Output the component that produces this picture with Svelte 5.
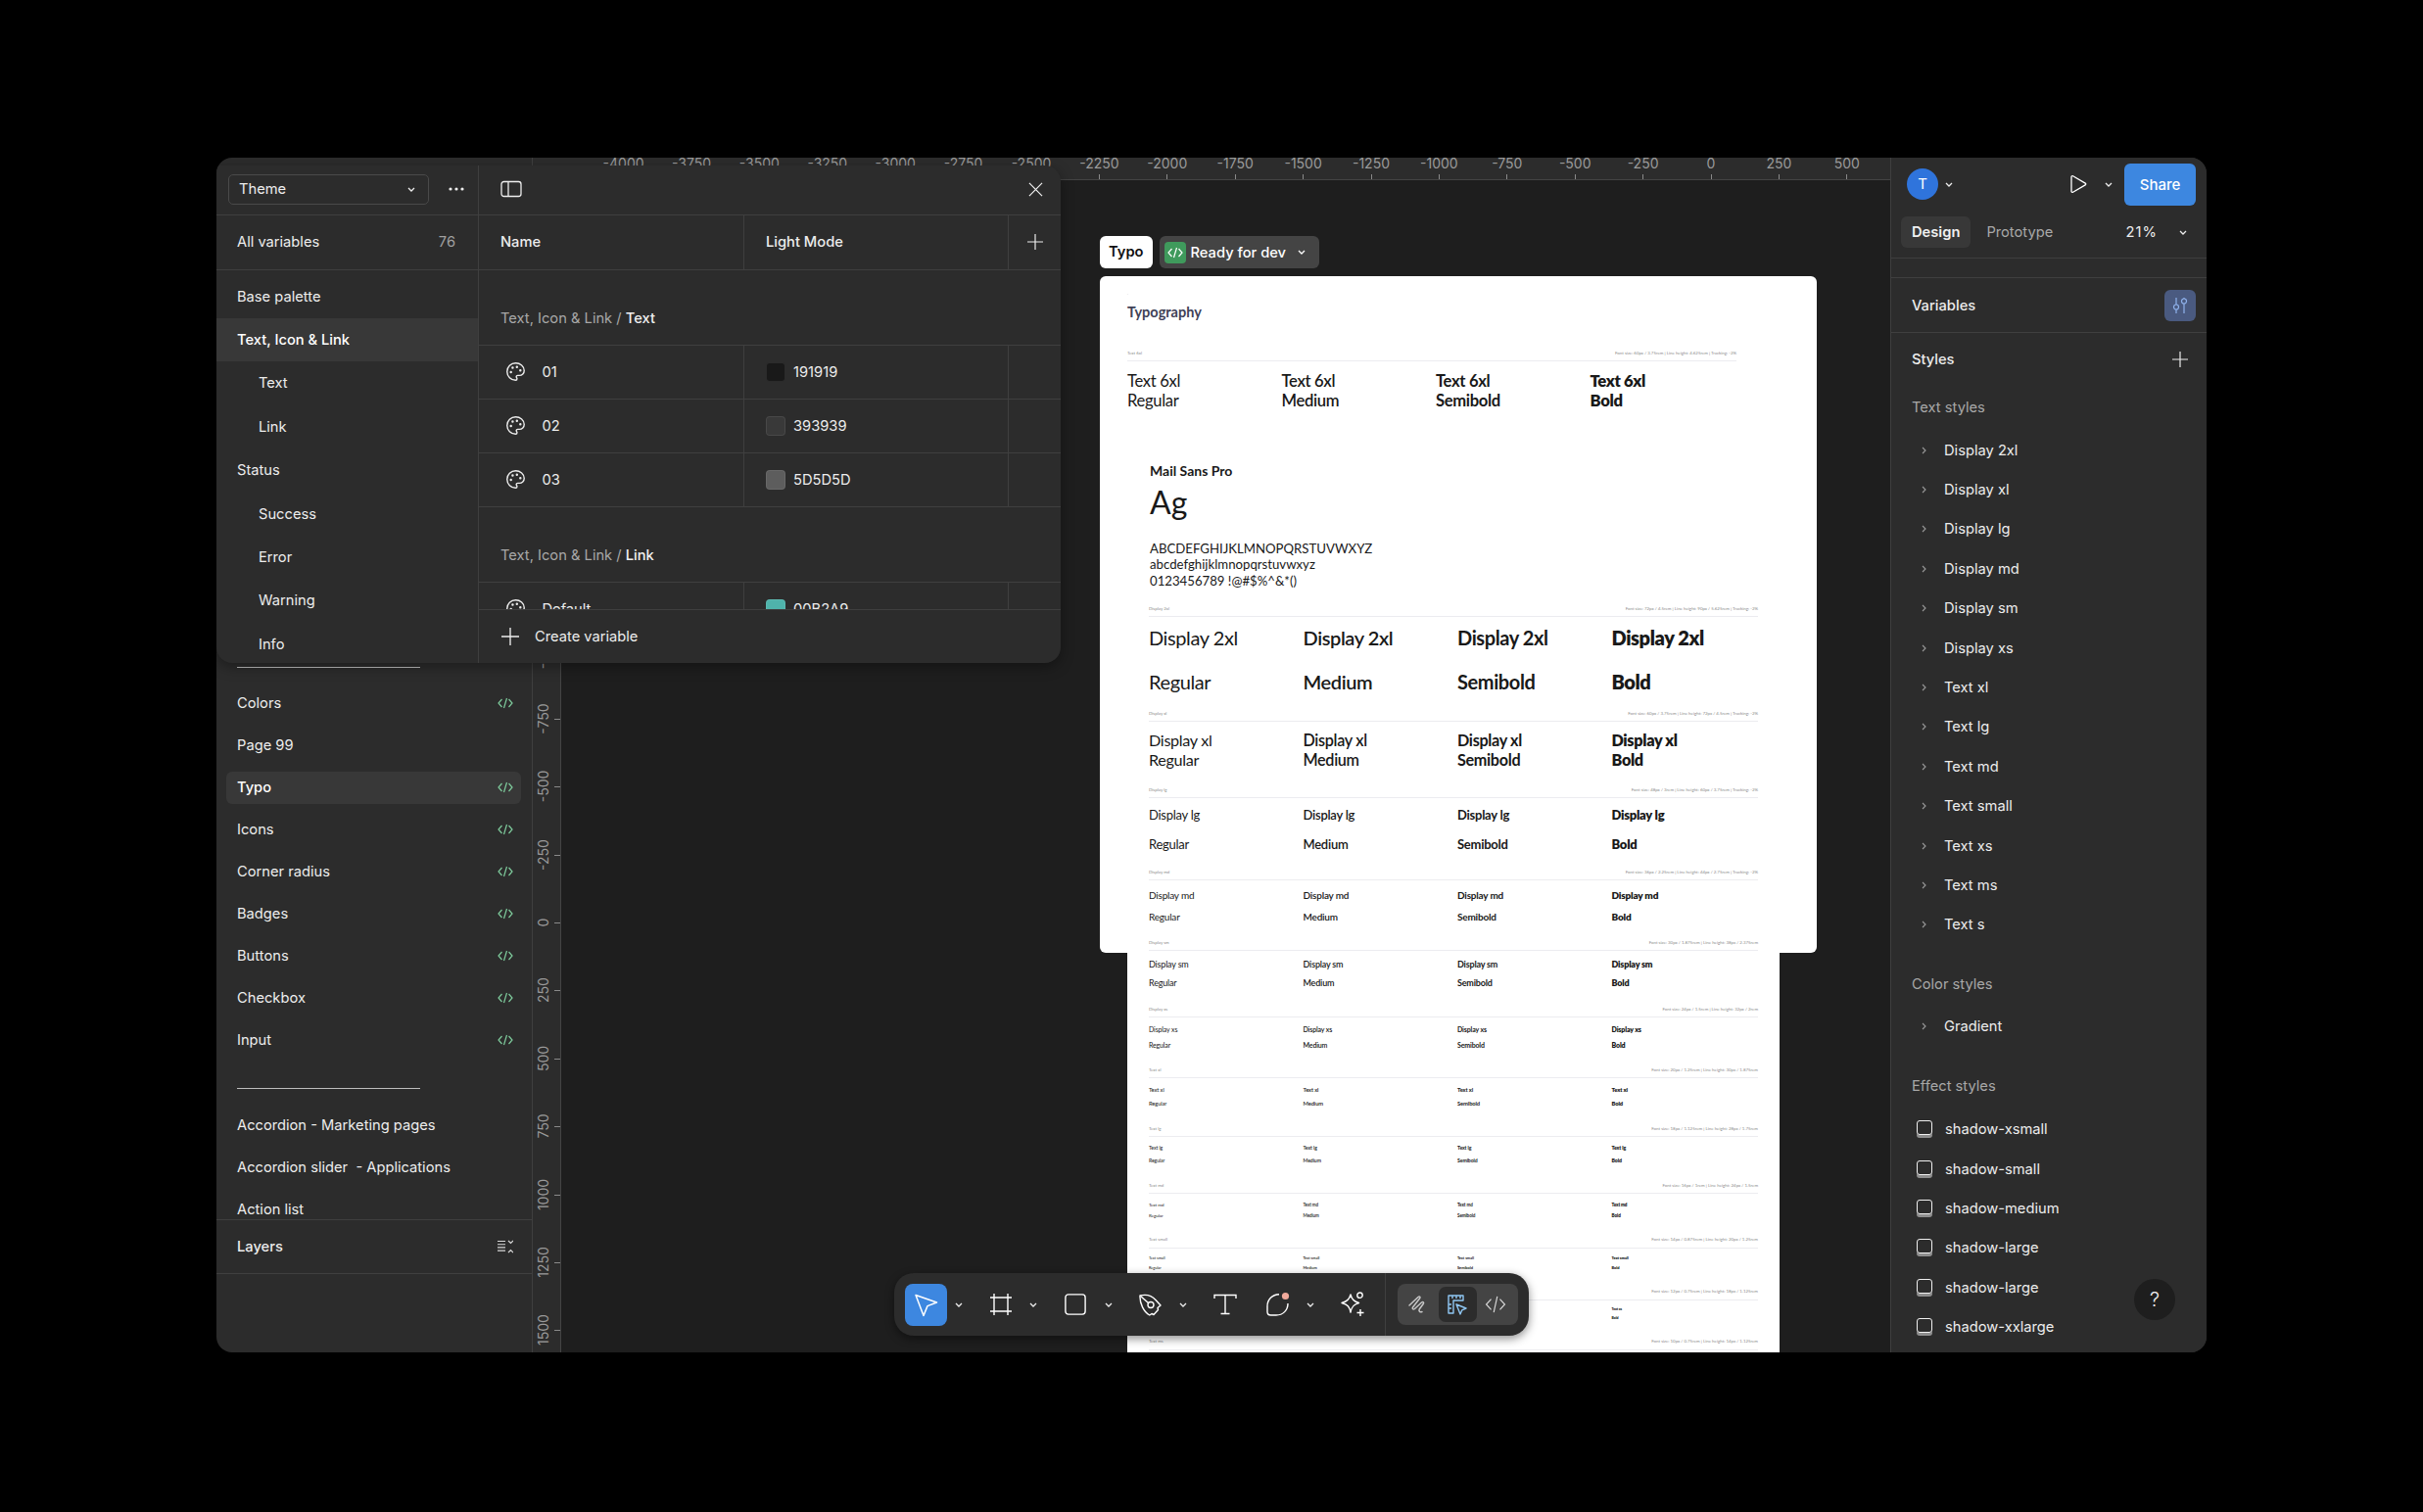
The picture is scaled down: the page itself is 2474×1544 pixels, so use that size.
<script>
  const hMarks = [];
  for (let v = -4000; v <= 500; v += 250) hMarks.push({ v, x: 1203 + (v / 250) * 69.4 });
  const vMarks = [];
  for (let v = -1000; v <= 1500; v += 250) vMarks.push({ v, y: 758 + (v / 250) * 69.4 });

  const pages = ['Colors', 'Page 99', 'Typo', 'Icons', 'Corner radius', 'Badges', 'Buttons', 'Checkbox', 'Input'];
  const pages2 = ['Accordion - Marketing pages', 'Accordion slider  - Applications', 'Action list'];
  const groups = [
    { t: 'Base palette' },
    { t: 'Text, Icon & Link', sel: true },
    { t: 'Text', sub: true },
    { t: 'Link', sub: true },
    { t: 'Status' },
    { t: 'Success', sub: true },
    { t: 'Error', sub: true },
    { t: 'Warning', sub: true },
    { t: 'Info', sub: true }
  ];
  const vars = [
    { n: '01', c: '#191919', v: '191919' },
    { n: '02', c: '#393939', v: '393939' },
    { n: '03', c: '#5D5D5D', v: '5D5D5D' }
  ];
  const textStyles = ['Display 2xl', 'Display xl', 'Display lg', 'Display md', 'Display sm', 'Display xs', 'Text xl', 'Text lg', 'Text md', 'Text small', 'Text xs', 'Text ms', 'Text s'];
  const shadows = ['shadow-xsmall', 'shadow-small', 'shadow-medium', 'shadow-large', 'shadow-large', 'shadow-xxlarge'];
  const weights = [
    { n: 'Regular', w: 400 },
    { n: 'Medium', w: 600 },
    { n: 'Semibold', w: 700 },
    { n: 'Bold', w: 800 }
  ];
  const S = [
    { l: 'Display 2xl', m: 'Font size: 72px / 4.5rem | Line height: 90px / 5.625rem | Tracking: -2%', y: 621.7, ln: 630, r1: 651.7, r2: 696.7, fs: 20 },
    { l: 'Display xl', m: 'Font size: 60px / 3.75rem | Line height: 72px / 4.5rem | Tracking: -2%', y: 729, ln: 737, r1: 757, r2: 777, fs: 16.2 },
    { l: 'Display lg', m: 'Font size: 48px / 3rem | Line height: 60px / 3.75rem | Tracking: -2%', y: 807, ln: 815, r1: 833, r2: 863, fs: 13 },
    { l: 'Display md', m: 'Font size: 36px / 2.25rem | Line height: 44px / 2.75rem | Tracking: -2%', y: 891, ln: 899, r1: 915, r2: 937, fs: 10 },
    { l: 'Display sm', m: 'Font size: 30px / 1.875rem | Line height: 38px / 2.375rem', y: 963, ln: 971, r1: 986, r2: 1005, fs: 9 },
    { l: 'Display xs', m: 'Font size: 24px / 1.5rem | Line height: 32px / 2rem', y: 1031, ln: 1039, r1: 1052, r2: 1068, fs: 7 },
    { l: 'Text xl', m: 'Font size: 20px / 1.25rem | Line height: 30px / 1.875rem', y: 1093, ln: 1101, r1: 1114, r2: 1128, fs: 5.8 },
    { l: 'Text lg', m: 'Font size: 18px / 1.125rem | Line height: 28px / 1.75rem', y: 1153, ln: 1161, r1: 1173, r2: 1186, fs: 5.2 },
    { l: 'Text md', m: 'Font size: 16px / 1rem | Line height: 24px / 1.5rem', y: 1211, ln: 1219, r1: 1231, r2: 1242, fs: 4.6 },
    { l: 'Text small', m: 'Font size: 14px / 0.875rem | Line height: 20px / 1.25rem', y: 1266, ln: 1275, r1: 1286, r2: 1296, fs: 4 },
    { l: 'Text xs', m: 'Font size: 12px / 0.75rem | Line height: 18px / 1.125rem', y: 1319, ln: 1328, r1: 1338, r2: 1347, fs: 3.5 },
    { l: 'Text ms', m: 'Font size: 10px / 0.75rem | Line height: 14px / 1.125rem', y: 1370, ln: 1379, r1: 1392, r2: 1400, fs: 3 }
  ];
  const sections = S.map((s, i) => ({
    ...s,
    h: (S[i + 1] ? S[i + 1].y : s.y + 60) - s.y,
    metaH: s.ln - s.y + 4,
    gap1: s.r1 - s.ln - 4.5,
    gap2: s.r2 - s.r1 - 8
  }));
</script>

{#snippet chev()}
  <svg class="chev" viewBox="0 0 8 5" width="8" height="5"><path d="M1 1l3 3 3-3" fill="none" stroke="currentColor" stroke-width="1.3" /></svg>
{/snippet}
{#snippet plus(size)}
  <svg viewBox="0 0 16 16" width={size} height={size}><path d="M8 0v16M0 8h16" stroke="currentColor" stroke-width="1.2" fill="none" /></svg>
{/snippet}
{#snippet code()}
  <svg viewBox="0 0 16 12" width="16" height="12" class="devmark"><path d="M4.5 2 1 6l3.5 4M11.5 2 15 6l-3.5 4M9.5 1 6.5 11" fill="none" stroke="currentColor" stroke-width="1.2" /></svg>
{/snippet}
{#snippet palette()}
  <svg viewBox="0 0 24 24" width="21" height="21" fill="none" stroke="currentColor" stroke-width="1.6" stroke-linecap="round" stroke-linejoin="round"><circle cx="13.5" cy="6.5" r=".6" fill="currentColor" /><circle cx="17.5" cy="10.5" r=".6" fill="currentColor" /><circle cx="8.5" cy="7.5" r=".6" fill="currentColor" /><circle cx="6.5" cy="12.5" r=".6" fill="currentColor" /><path d="M12 2C6.5 2 2 6.5 2 12s4.5 10 10 10c.926 0 1.648-.746 1.648-1.688 0-.437-.18-.835-.437-1.125-.29-.289-.438-.652-.438-1.125a1.64 1.64 0 0 1 1.668-1.668h1.996c3.051 0 5.555-2.503 5.555-5.554C21.965 6.012 17.461 2 12 2z" /></svg>
{/snippet}

<div class="window">
  <aside class="left">
    <div class="pages">
      <div class="sep-row"><i></i></div>
      {#each pages as p}
        <div class="page" class:on={p === 'Typo'}>
          <span>{p}</span>
          {#if p !== 'Page 99'}{@render code()}{/if}
        </div>
      {/each}
      <div class="sep-row two"><i></i></div>
      {#each pages2 as p}
        <div class="page"><span>{p}</span></div>
      {/each}
    </div>
    <div class="layers">
      <span>Layers</span>
      <svg viewBox="0 0 16 14" width="16" height="14" fill="none" stroke="#d8d8d8" stroke-width="1.1"><path d="M0 1.5h8M0 4.7h8M0 7.9h8M0 11.1h8M11 1l2.5 2.5L16 1M11 13l2.5-2.5L16 13" /></svg>
    </div>
  </aside>

  <main class="center">
    <div class="hruler">
      {#each hMarks as m}
        <div class="hmark" style="left:{m.x}px"><span>{m.v}</span><i></i></div>
      {/each}
    </div>
    <div class="stage">
      <div class="vruler">
        {#each vMarks as m}
          <div class="vmark" style="top:{m.y}px"><span>{m.v}</span><i></i></div>
        {/each}
      </div>
      <div class="canvas">
        <div class="label-row">
          <div class="name-tag">Typo</div>
          <div class="ready">
            <span class="ready-ic"><svg viewBox="0 0 16 12" width="16" height="12"><path d="M4.5 2 1 6l3.5 4M11.5 2 15 6l-3.5 4M9.5 1 6.5 11" fill="none" stroke="#fff" stroke-width="1.2" /></svg></span>
            <span>Ready for dev</span>
            {@render chev()}
          </div>
        </div>
        <div class="back"></div>
        <div class="card">
          <div class="head">
            <div class="tiny-dot">.</div>
            <div class="typography">Typography</div>
          </div>
          <section class="first" style="height:114px">
            <div class="meta" style="height:12px"><span>Text 6xl</span><span>Font size: 60px / 3.75rem | Line height: 4.625rem | Tracking: -2%</span></div>
            <div class="row six" style="font-size:16.6px;margin-top:16px">
              {#each weights as w}<span style="font-weight:{w.w}">Text 6xl</span>{/each}
            </div>
            <div class="row six" style="font-size:16.6px;margin-top:12px">
              {#each weights as w}<span style="font-weight:{w.w}">{w.n}</span>{/each}
            </div>
          </section>
          <div class="mail">
            <div class="mail-title">Mail Sans Pro</div>
            <div class="ag">Ag</div>
            <div class="alpha">ABCDEFGHIJKLMNOPQRSTUVWXYZ</div>
            <div class="alpha">abcdefghijklmnopqrstuvwxyz</div>
            <div class="alpha">0123456789 !@#$%^&amp;*()</div>
          </div>
          {#each sections as s}
            <section style="height:{s.h}px">
              <div class="meta" style="height:{s.metaH}px"><span>{s.l}</span><span>{s.m}</span></div>
              <div class="row" style="font-size:{s.fs}px;margin-top:{s.gap1}px">
                {#each weights as w}<span style="font-weight:{w.w}">{s.l}</span>{/each}
              </div>
              <div class="row" style="font-size:{s.fs}px;margin-top:{s.gap2}px">
                {#each weights as w}<span style="font-weight:{w.w}">{w.n}</span>{/each}
              </div>
            </section>
          {/each}
        </div>
      </div>
    </div>
  </main>

  <aside class="right">
    <div class="top">
      <div class="avatar">T</div>
      <span class="c1">{@render chev()}</span>
      <svg class="play" viewBox="0 0 18 20" width="18" height="20"><path d="M2 2.6c0-.8.9-1.3 1.6-.9l12.6 7.4c.7.4.7 1.4 0 1.8L3.6 18.3c-.7.4-1.6-.1-1.6-.9z" fill="none" stroke="#fff" stroke-width="1.3" /></svg>
      <span class="c2">{@render chev()}</span>
      <button class="share">Share</button>
    </div>
    <div class="tabs">
      <div class="tab on">Design</div>
      <div class="tab">Prototype</div>
      <div class="zoom">21%</div>
      <span class="c3">{@render chev()}</span>
    </div>
    <div class="blank"></div>
    <div class="vars">
      <b>Variables</b>
      <div class="vars-btn">
        <svg viewBox="0 0 18 18" width="18" height="18" fill="none" stroke="#8fb2ec" stroke-width="1.2"><path d="M5 1v7M13 7v10M5 13v4M13 1v1" /><circle cx="5" cy="10.5" r="2.5" /><circle cx="13" cy="4.5" r="2.5" /></svg>
      </div>
    </div>
    <div class="styles-h">
      <b>Styles</b>
      {@render plus(16)}
    </div>
    <div class="lab">Text styles</div>
    {#each textStyles as t}
      <div class="st">
        <svg class="arrow" viewBox="0 0 5 8" width="5" height="8"><path d="M1 1l3 3-3 3" fill="none" stroke="#9a9a9a" stroke-width="1.1" /></svg>
        <span>{t}</span>
      </div>
    {/each}
    <div class="lab gap">Color styles</div>
    <div class="st">
      <svg class="arrow" viewBox="0 0 5 8" width="5" height="8"><path d="M1 1l3 3-3 3" fill="none" stroke="#9a9a9a" stroke-width="1.1" /></svg>
      <span>Gradient</span>
    </div>
    <div class="lab gap effect">Effect styles</div>
    {#each shadows as t}
      <div class="st fx"><i class="shadow-ic"></i><span>{t}</span></div>
    {/each}
    <div class="help">?</div>
  </aside>

  <div class="modal">
    <div class="m-side">
      <div class="m-head">
        <div class="select"><span>Theme</span>{@render chev()}</div>
        <svg class="dots" viewBox="0 0 16 4" width="16" height="4"><circle cx="2" cy="2" r="1.6" fill="#eee" /><circle cx="8" cy="2" r="1.6" fill="#eee" /><circle cx="14" cy="2" r="1.6" fill="#eee" /></svg>
      </div>
      <div class="all"><span>All variables</span><span class="count">76</span></div>
      <div class="glist">
        {#each groups as g}
          <div class="g" class:sub={g.sub} class:sel={g.sel}>{g.t}</div>
        {/each}
      </div>
    </div>
    <div class="m-main">
      <div class="m-head right-head">
        <svg viewBox="0 0 22 20" width="22" height="20" fill="none" stroke="#eee" stroke-width="1.3"><rect x="1" y="2.5" width="20" height="15" rx="2.5" /><path d="M8 2.5v15" /></svg>
        <svg viewBox="0 0 16 16" width="15" height="15" fill="none" stroke="#eee" stroke-width="1.3"><path d="M1 1l14 14M15 1 1 15" /></svg>
      </div>
      <div class="grid head-row">
        <div class="cell"><b>Name</b></div>
        <div class="cell"><b>Light Mode</b></div>
        <div class="cell plus-cell">{@render plus(16)}</div>
      </div>
      <div class="scroll">
        <div class="glabel">Text, Icon &amp; Link / <b>Text</b></div>
        {#each vars as v}
          <div class="grid vrow">
            <div class="cell name">{@render palette()}<span>{v.n}</span></div>
            <div class="cell val"><i class="swatch" style="background:{v.c}"></i><span>{v.v}</span></div>
            <div class="cell"></div>
          </div>
        {/each}
        <div class="glabel">Text, Icon &amp; Link / <b>Link</b></div>
        <div class="grid vrow">
          <div class="cell name">{@render palette()}<span>Default</span></div>
          <div class="cell val"><i class="swatch" style="background:#4fb3ab"></i><span>00B2A9</span></div>
          <div class="cell"></div>
        </div>
      </div>
      <div class="foot">{@render plus(18)}<span>Create variable</span></div>
    </div>
  </div>

  <div class="toolbar">
    <div class="tg">
      <div class="tool active">
        <svg viewBox="0 0 25 25" width="25" height="25" fill="none" stroke="#fff" stroke-width="1.5" stroke-linejoin="round"><path d="M2 2.5 23.5 10l-9.5 3.6L10 23.5z" /></svg>
      </div>
      <span class="tc">{@render chev()}</span>
    </div>
    <div class="tg">
      <div class="tool">
        <svg viewBox="0 0 22 22" width="22" height="22" fill="none" stroke="#fff" stroke-width="1.4"><path d="M4 0v22M18 0v22M0 4h22M0 18h22" /></svg>
      </div>
      <span class="tc">{@render chev()}</span>
    </div>
    <div class="tg">
      <div class="tool">
        <svg viewBox="0 0 22 22" width="22" height="22" fill="none" stroke="#fff" stroke-width="1.4"><rect x=".9" y=".9" width="20.2" height="20.2" rx="3" /></svg>
      </div>
      <span class="tc">{@render chev()}</span>
    </div>
    <div class="tg">
      <div class="tool">
        <svg viewBox="0 0 25 25" width="25" height="25" fill="none" stroke="#fff" stroke-width="1.4" stroke-linejoin="round"><path d="M2 3c6-1.5 12 0 16 4.500l5 5.500-3 2.500.5 2-4.500 5-2-1-2.200 1.500C6 20 1.500 11 2 3z" /><circle cx="13" cy="12.500" r="3" /><path d="M2.500 3.500l8 7" /></svg>
      </div>
      <span class="tc">{@render chev()}</span>
    </div>
    <div class="tg">
      <div class="tool">
        <svg viewBox="0 0 24 22" width="24" height="22" fill="none" stroke="#fff" stroke-width="1.4"><path d="M1 5V1.500h22V5M12 1.500V20.500M7.500 20.500h9" /></svg>
      </div>
    </div>
    <div class="tg shape">
      <div class="tool">
        <svg viewBox="0 0 26 26" width="26" height="26" fill="none" stroke="#fff" stroke-width="1.4"><path d="M14 2.800C7 3 2 8 2 15v5.500C2 23 3.500 24 5.500 24H11c7 0 12-5 12-12" /><circle cx="20.500" cy="4.500" r="3.600" fill="#f0a99b" stroke="none" /></svg>
      </div>
      <span class="tc">{@render chev()}</span>
    </div>
    <div class="tg">
      <div class="tool">
        <svg viewBox="0 0 26 26" width="26" height="26" fill="none" stroke="#fff" stroke-width="1.4" stroke-linejoin="round"><path d="M11 3c1 4.500 3 7 8.500 8.500C14 13 12 15.500 11 21c-1-5.500-3-8-9-9.500C8 10 10 7.500 11 3z" /><circle cx="20.500" cy="3.700" r="2.700" /><path d="M21 18v7M17.500 21.500h7" /></svg>
      </div>
    </div>
    <div class="tdiv"></div>
    <div class="seg">
      <div class="segb">
        <svg viewBox="0 0 24 24" width="24" height="24" fill="none" stroke="#c6c6c6" stroke-width="1.5" stroke-linecap="round" stroke-linejoin="round"><path d="M2 13 11 4.500c1.500-1.200 2.800 0 1.500 1.500L5.500 15c-1 1.500.5 2.700 2 1.500l7-6.500c1.500-1.200 2.800 0 1.700 1.500l-4 5.500c-1 2 1 3.500 2.800 2.500" /></svg>
      </div>
      <div class="segb on">
        <svg viewBox="0 0 22 22" width="22" height="22" fill="none" stroke="#8fc6f2" stroke-width="1.4" stroke-linejoin="round"><path d="M2 2h15v5H7v13H2zM6 2v3M10 2v3M14 2v3M2 11h3M2 15h3" /><path d="M10 11l10 4-4.200 1.800L14 21z" /></svg>
      </div>
      <div class="segb">
        <svg viewBox="0 0 24 20" width="22" height="18" fill="none" stroke="#d8d8d8" stroke-width="1.3"><path d="M7 4 1.500 10 7 16M17 4l5.500 6L17 16M14 1 10 19" /></svg>
      </div>
    </div>
  </div>
</div>

<style>
  :global(body) {
    margin: 0;
    background: #000;
    font-family: Inter, "Liberation Sans", sans-serif;
  }
  .window {
    position: relative;
    display: flex;
    width: 2032px;
    height: 1220px;
    margin: 161px 0 0 221px;
    background: #2c2c2c;
    border-radius: 16px;
    overflow: hidden;
    color: #ededed;
    font-size: 14.7px;
  }
  .left {
    width: 322px;
    flex: none;
    display: flex;
    flex-direction: column;
    border-right: 1px solid #3f3f3f;
  }
  .pages {
    height: 1084px;
    padding-top: 492.5px;
    box-sizing: border-box;
    overflow: hidden;
    flex: none;
  }
  .sep-row {
    height: 43px;
    padding: 27px 0 0 21px;
    box-sizing: border-box;
  }
  .sep-row.two {
    height: 43.500px;
  }
  .sep-row i {
    display: block;
    width: 187px;
    height: 1px;
    background: #bdbdbd;
  }
  .page {
    height: 43.050px;
    margin: 0 11px 0 10px;
    padding: 0 8px 0 11px;
    display: flex;
    align-items: center;
    justify-content: space-between;
    border-radius: 6px;
    white-space: pre;
  }
  .page.on {
    background: #383838;
    font-weight: 550;
    color: #fff;
    height: 33px;
    margin-top: 5px;
    margin-bottom: 5.050px;
  }
  .devmark {
    color: #7ecb9c;
  }
  .layers {
    height: 54px;
    border-top: 1px solid #3f3f3f;
    border-bottom: 1px solid #3f3f3f;
    padding: 0 19px 0 21px;
    display: flex;
    align-items: center;
    justify-content: space-between;
    font-weight: 550;
  }
  .center {
    flex: 1;
    min-width: 0;
    display: flex;
    flex-direction: column;
    background: #1e1e1e;
  }
  .hruler {
    position: relative;
    height: 22px;
    flex: none;
    background: #2c2c2c;
    border-bottom: 1px solid #444;
    overflow: hidden;
  }
  .hmark {
    position: absolute;
    top: 0;
    width: 80px;
    margin-left: -40px;
    text-align: center;
    color: #9a9a9a;
    font-size: 14px;
    line-height: 11px;
  }
  .hmark i {
    position: absolute;
    left: 39.500px;
    top: 17px;
    width: 1px;
    height: 5px;
    background: #8a8a8a;
  }
  .stage {
    flex: 1;
    min-height: 0;
    display: flex;
  }
  .vruler {
    position: relative;
    width: 28px;
    flex: none;
    background: #2c2c2c;
    border-right: 1px solid #444;
    overflow: hidden;
  }
  .vmark {
    position: absolute;
    left: 0;
    width: 28px;
    height: 0;
  }
  .vmark span {
    position: absolute;
    left: 10px;
    top: 0;
    transform: translate(-50%, -50%) rotate(-90deg);
    font-size: 14px;
    color: #9a9a9a;
    white-space: nowrap;
  }
  .vmark i {
    position: absolute;
    right: 0;
    top: 0;
    width: 6px;
    height: 1px;
    background: #8a8a8a;
  }
  .canvas {
    position: relative;
    flex: 1;
    overflow: hidden;
  }
  .label-row {
    position: absolute;
    left: 550px;
    top: 57px;
    display: flex;
    gap: 7px;
    height: 33px;
  }
  .name-tag {
    background: #fff;
    color: #111;
    font-weight: 600;
    padding: 0 9px;
    line-height: 33px;
    border-radius: 6px;
  }
  .ready {
    width: 163px;
    box-sizing: border-box;
    background: #444;
    border-radius: 6px;
    display: flex;
    align-items: center;
    gap: 5px;
    padding: 0 5px;
    font-weight: 500;
    color: #fff;
  }
  .ready .chev {
    margin-left: 7px;
  }
  .ready-ic {
    width: 22px;
    height: 22px;
    background: #3f9a5c;
    border-radius: 4px;
    display: flex;
    align-items: center;
    justify-content: center;
  }
  .back {
    position: absolute;
    left: 578px;
    top: 98px;
    width: 666px;
    height: 1100px;
    background: #fff;
  }
  .card {
    position: absolute;
    left: 550px;
    top: 97.500px;
    width: 732px;
    height: 691px;
    background: #fff;
    border-radius: 6px;
    color: #191919;
    font-family: Lato, "Open Sans", sans-serif;
  }
  .head {
    height: 75.500px;
    padding-left: 28px;
    box-sizing: border-box;
  }
  .tiny-dot {
    font-size: 4px;
    height: 4px;
    line-height: 4px;
    padding-top: 16.500px;
    color: #999;
  }
  .typography {
    margin-top: 7px;
    font-size: 14.500px;
    line-height: 20px;
    font-weight: 700;
    color: #3f4257;
  }
  section {
    margin-left: 50px;
    width: 622px;
  }
  section.first {
    margin-left: 28px;
  }
  .meta {
    box-sizing: border-box;
    display: flex;
    justify-content: space-between;
    font-size: 4.4px;
    line-height: 8px;
    color: #8a8a8a;
    border-bottom: 1px solid #ececf0;
  }
  .row {
    display: grid;
    grid-template-columns: repeat(4, 157.500px);
    line-height: 8px;
    height: 8px;
    white-space: nowrap;
    letter-spacing: -0.02em;
  }
  .six {
    line-height: 8px;
  }
  .mail {
    height: 146.700px;
    margin-left: 51px;
  }
  .mail-title {
    font-size: 14px;
    font-weight: 700;
    line-height: 20px;
  }
  .ag {
    font-size: 32px;
    line-height: 36px;
    margin: 4px 0 20.700px;
  }
  .alpha {
    font-size: 13.200px;
    line-height: 16.500px;
  }
  .right {
    position: relative;
    width: 322px;
    flex: none;
    border-left: 1px solid #3f3f3f;
    margin-left: -1px;
    background: #2c2c2c;
    z-index: 1;
  }
  .top {
    height: 54px;
    display: flex;
    align-items: center;
    padding: 0 11px 0 16px;
  }
  .avatar {
    width: 32px;
    height: 32px;
    border-radius: 50%;
    background: #2f74dc;
    color: #fff;
    text-align: center;
    line-height: 32px;
    font-size: 15px;
  }
  .chev {
    display: block;
  }
  .c1 {
    margin-left: 7px;
  }
  .play {
    margin-left: auto;
  }
  .c2 {
    margin: 0 12px 0 18px;
  }
  .share {
    width: 73px;
    height: 43px;
    background: #3d87e0;
    color: #fff;
    border: 0;
    border-radius: 6px;
    font: 500 15px Inter, sans-serif;
  }
  .tabs {
    height: 49px;
    box-sizing: border-box;
    display: flex;
    align-items: flex-start;
    padding: 6px 20px 0 10px;
    border-bottom: 1px solid #3f3f3f;
    gap: 5px;
  }
  .tab {
    height: 32px;
    line-height: 32px;
    padding: 0 11px;
    color: #a8a8a8;
    border-radius: 6px;
  }
  .tab.on {
    background: #383838;
    color: #f0f0f0;
    font-weight: 600;
  }
  .zoom {
    margin-left: auto;
    line-height: 32px;
    letter-spacing: 0.07em;
  }
  .c3 {
    margin: 14px 0 0 17px;
  }
  .blank {
    height: 20px;
    border-bottom: 1px solid #3f3f3f;
    box-sizing: border-box;
  }
  .vars,
  .styles-h {
    display: flex;
    align-items: center;
    justify-content: space-between;
    padding: 0 11px 0 21px;
  }
  .vars {
    height: 56px;
    border-bottom: 1px solid #3f3f3f;
    box-sizing: border-box;
  }
  .styles-h {
    height: 54px;
    padding-right: 19px;
  }
  b {
    font-weight: 550;
  }
  .vars-btn {
    width: 32px;
    height: 32px;
    background: #4a5a80;
    border-radius: 6px;
    display: flex;
    align-items: center;
    justify-content: center;
  }
  .lab {
    height: 44px;
    line-height: 44px;
    margin-bottom: 1.500px;
    padding-left: 21px;
    color: #a8a8a8;
  }
  .lab.gap {
    margin-top: 18px;
  }
  .lab.effect {
    margin-top: 19px;
  }
  .st {
    height: 40.400px;
    display: flex;
    align-items: center;
    padding-left: 31px;
    gap: 18px;
  }
  .fx {
    padding-left: 26px;
    gap: 13px;
  }
  .shadow-ic {
    display: block;
    width: 16px;
    height: 15px;
    box-sizing: border-box;
    border: 1.5px solid #f0f0f0;
    border-radius: 3px;
    margin-bottom: 3px;
    box-shadow: 0 3px 0 0 #8e8e8e;
  }
  .help {
    position: absolute;
    left: 248px;
    top: 1145px;
    width: 42px;
    height: 42px;
    border-radius: 50%;
    background: #1e1e1e;
    text-align: center;
    line-height: 42px;
    font-size: 20px;
    font-weight: 300;
  }
  .modal {
    position: absolute;
    left: 0;
    top: 8px;
    width: 862px;
    height: 508px;
    display: flex;
    background: #2c2c2c;
    border-radius: 0 16px 16px 16px;
    box-shadow: 0 4px 14px rgba(0, 0, 0, 0.35);
    overflow: hidden;
    z-index: 2;
  }
  .m-side {
    width: 267px;
    flex: none;
    border-right: 1px solid #3f3f3f;
  }
  .m-head {
    height: 51px;
    box-sizing: border-box;
    border-bottom: 1px solid #3f3f3f;
    display: flex;
    align-items: center;
    padding: 0 12px 2px;
    justify-content: space-between;
  }
  .select {
    width: 205px;
    height: 31px;
    box-sizing: border-box;
    border: 1px solid #4a4a4a;
    border-radius: 5px;
    padding: 0 13px 0 10px;
    display: flex;
    align-items: center;
    justify-content: space-between;
  }
  .dots {
    margin-right: 2px;
  }
  .all {
    height: 55.500px;
    box-sizing: border-box;
    border-bottom: 1px solid #3f3f3f;
    display: flex;
    align-items: center;
    justify-content: space-between;
    padding: 0 23px 0 21px;
  }
  .count {
    color: #a0a0a0;
  }
  .glist {
    padding-top: 5.100px;
  }
  .g {
    height: 44.400px;
    line-height: 44.400px;
    padding-left: 21px;
  }
  .g.sub {
    padding-left: 43px;
  }
  .g.sel {
    background: #383838;
    font-weight: 550;
    color: #fff;
  }
  .m-main {
    flex: 1;
    min-width: 0;
    display: flex;
    flex-direction: column;
  }
  .right-head {
    padding: 0 18px 2px 22px;
  }
  .grid {
    display: grid;
    grid-template-columns: 271px 270px 1fr;
    border-bottom: 1px solid #3f3f3f;
    box-sizing: border-box;
  }
  .head-row {
    height: 55.500px;
  }
  .cell {
    display: flex;
    align-items: center;
    padding-left: 22px;
    border-right: 1px solid #3f3f3f;
    box-sizing: border-box;
    min-width: 0;
  }
  .cell:last-child {
    border-right: 0;
  }
  .plus-cell {
    padding-left: 19px;
  }
  .scroll {
    height: 346.500px;
    overflow: hidden;
    flex: none;
  }
  .glabel {
    height: 77px;
    box-sizing: border-box;
    padding: 38px 0 0 22px;
    line-height: 22px;
    color: #a8a8a8;
    border-bottom: 1px solid #3f3f3f;
  }
  .glabel b {
    color: #f0f0f0;
  }
  .vrow {
    height: 55px;
  }
  .name {
    gap: 16.500px;
    padding-left: 27px;
  }
  .val {
    gap: 8px;
    padding-left: 22px;
  }
  .swatch {
    width: 20px;
    height: 20px;
    border-radius: 4px;
    box-sizing: border-box;
    border: 1px solid rgba(255, 255, 255, 0.08);
    display: block;
  }
  .foot {
    height: 55px;
    border-top: 1px solid #3f3f3f;
    box-sizing: border-box;
    display: flex;
    align-items: center;
    padding-left: 23px;
    gap: 16px;
    flex: none;
  }
  .toolbar {
    position: absolute;
    left: 692px;
    top: 1139px;
    width: 648px;
    height: 64px;
    box-sizing: border-box;
    display: flex;
    align-items: center;
    gap: 9.500px;
    padding: 0 10px 0 10.500px;
    background: #2c2c2c;
    border-radius: 20px;
    box-shadow: 0 3px 10px rgba(0, 0, 0, 0.45);
    z-index: 1;
  }
  .tg {
    display: flex;
    align-items: center;
  }
  .tg.shape {
    margin-left: 1px;
  }
  .tool {
    width: 43px;
    height: 43px;
    border-radius: 8px;
    display: flex;
    align-items: center;
    justify-content: center;
  }
  .tool.active {
    background: #3d87e0;
  }
  .tc {
    width: 24px;
    display: flex;
    justify-content: center;
  }
  .tdiv {
    width: 1px;
    height: 64px;
    background: #3f3f3f;
    margin: 0 2px 0 2px;
  }
  .seg {
    width: 123px;
    height: 42px;
    background: #444;
    border-radius: 8px;
    display: flex;
    align-items: center;
    padding: 0 2px 0 3px;
    box-sizing: border-box;
  }
  .segb {
    width: 39px;
    height: 36px;
    border-radius: 7px;
    display: flex;
    align-items: center;
    justify-content: center;
  }
  .segb.on {
    background: #2c2c2c;
  }
</style>
